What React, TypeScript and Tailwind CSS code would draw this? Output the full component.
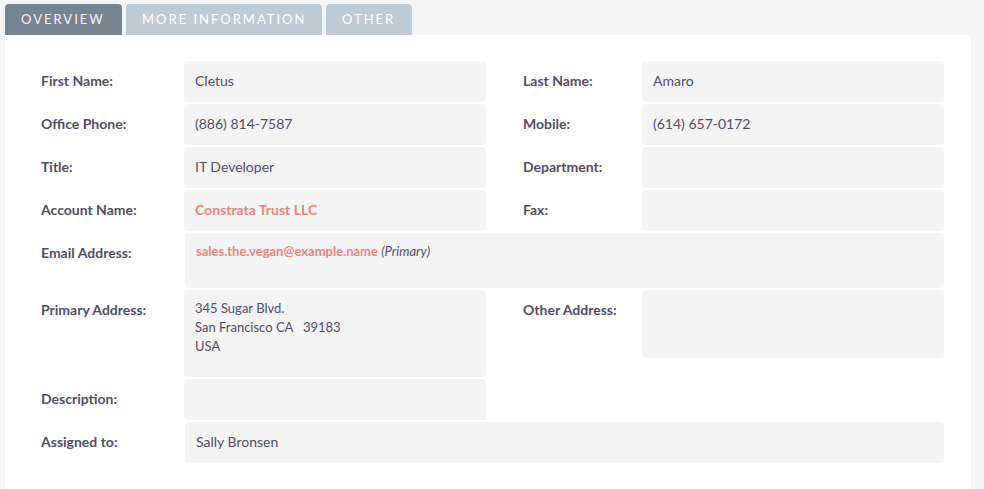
const labelCls = "text-[14px] leading-[20px] font-bold text-[#534d64] pt-[10px]";
const boxCls = "rounded-[4px] bg-[#f4f4f4] px-[11px] pt-[10px] text-[14px] leading-[20px] text-[#534d64]";

function Field({
  label,
  value,
  labelW,
  link,
}: {
  label: string;
  value?: string;
  labelW: string;
  link?: boolean;
}) {
  return (
    <div className="flex">
      <div className={`${labelW} ${labelCls}`}>{label}</div>
      <div className={`${boxCls} h-[41px] w-[302px] ${link ? "font-bold text-[#f08377]" : ""}`}>
        {value}
      </div>
    </div>
  );
}

function PairRow({
  left,
  right,
}: {
  left: { label: string; value?: string; link?: boolean };
  right: { label: string; value?: string };
}) {
  return (
    <div className="flex gap-[37px]">
      <Field labelW="w-[143px]" {...left} />
      <Field labelW="w-[119px]" {...right} />
    </div>
  );
}

export default function App() {
  const tabs = [
    { name: "Overview", w: "w-[117px]" },
    { name: "More Information", w: "w-[196px]" },
    { name: "Other", w: "w-[86px]" },
  ];

  return (
    <div className="min-h-screen bg-[#f5f5f5] pt-[4px] font-['Lato',sans-serif]">

      {/* Tabs */}

      <div className="ml-[5px] flex gap-[4px]">
        {tabs.map((t, i) => (
          <div
            key={t.name}
            className={`${t.w} h-[31px] whitespace-nowrap rounded-t-[4px] pl-[16px] pt-[7px] text-[13px] leading-[16px] uppercase tracking-[2px] ${
              i === 0 ? "bg-[#778591] text-[#f2f2f2]" : "bg-[#bfcad3] text-white"
            }`}
          >
            {t.name}
          </div>
        ))}
      </div>

      {/* Panel */}

      <div className="ml-[5px] w-[966px] rounded-tr-[4px] bg-white pl-[36px] pt-[26px] pb-[26px]">
        <div className="flex flex-col gap-[2px]">

          <PairRow
            left={{ label: "First Name:", value: "Cletus" }}
            right={{ label: "Last Name:", value: "Amaro" }}
          />

          <PairRow
            left={{ label: "Office Phone:", value: "(886) 814-7587" }}
            right={{ label: "Mobile:", value: "(614) 657-0172" }}
          />

          <PairRow
            left={{ label: "Title:", value: "IT Developer" }}
            right={{ label: "Department:" }}
          />

          <PairRow
            left={{ label: "Account Name:", value: "Constrata Trust LLC", link: true }}
            right={{ label: "Fax:" }}
          />

          {/* Email */}

          <div className="flex">
            <div className={`w-[144px] ${labelCls}`}>Email Address:</div>
            <div className="h-[55px] w-[759px] rounded-[4px] bg-[#f4f4f4] px-[11px] pt-[9px] text-[13px] leading-[18px] text-[#534d64]">
              <span className="font-bold text-[#f08377]">sales.the.vegan@example.name</span>{" "}
              <span className="italic">(Primary)</span>
            </div>
          </div>

          {/* Addresses */}

          <div className="flex items-start gap-[37px]">
            <div className="flex">
              <div className={`w-[143px] ${labelCls}`}>Primary Address:</div>
              <div className="h-[87px] w-[302px] whitespace-pre rounded-[4px] bg-[#f4f4f4] px-[11px] pt-[9px] text-[13px] leading-[19px] text-[#534d64]">
                {"345 Sugar Blvd.\nSan Francisco CA   39183\nUSA"}
              </div>
            </div>
            <div className="flex">
              <div className={`w-[119px] ${labelCls}`}>Other Address:</div>
              <div className="h-[68px] w-[302px] rounded-[4px] bg-[#f4f4f4]" />
            </div>
          </div>

          <div className="flex">
            <Field labelW="w-[143px]" label="Description:" />
          </div>

          <div className="flex">
            <div className={`w-[144px] ${labelCls}`}>Assigned to:</div>
            <div className={`${boxCls} h-[41px] w-[759px]`}>Sally Bronsen</div>
          </div>

        </div>
      </div>
    </div>
  );
}
